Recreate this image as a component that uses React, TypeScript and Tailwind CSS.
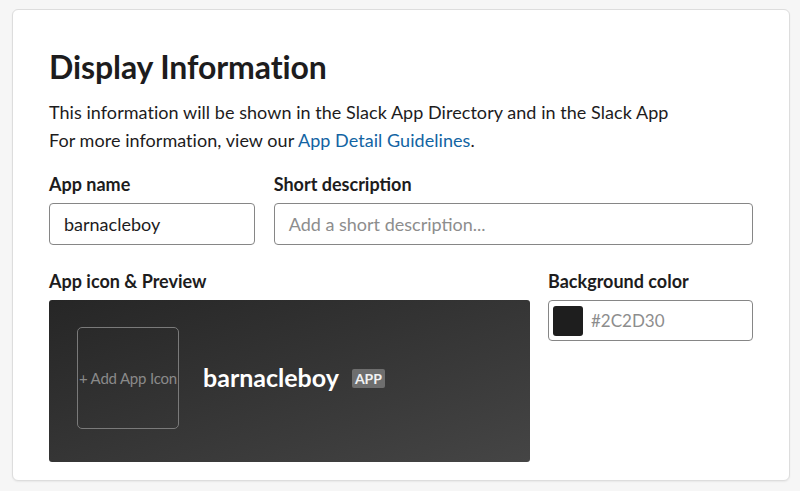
import React from "react";

const font = { fontFamily: "Lato, 'Open Sans', sans-serif" };

function Label({ children }: { children: React.ReactNode }) {
  return <div className="text-[18px] font-bold leading-[22px] text-[#1d1c1d] mb-[8px]">{children}</div>;
}

export default function App() {
  return (
    <div className="min-h-screen w-full bg-[#f6f6f6] pt-[9px] px-[12px] pb-[10px]" style={font}>
      <div className="w-[778px] h-[472px] bg-white border border-[#dddddd] rounded-[6px] shadow-[0_1px_2px_rgba(0,0,0,0.06)] px-[36px] pt-[37px]">
        {/* Header */}
        <h1 className="text-[32px] font-bold leading-[40px] text-[#1d1c1d] tracking-[-0.1px]">Display Information</h1>
        <p className="mt-[11px] text-[18px] leading-[28px] text-[#1d1c1d] tracking-[0.05px]">
          This information will be shown in the Slack App Directory and in the Slack App
          <br />
          For more information, view our <a className="text-[#1264a3]">App Detail Guidelines</a>.
        </p>

        {/* Name + description */}
        <div className="mt-[19px] flex gap-[19px]">
          <div className="w-[206px]">
            <Label>App name</Label>
            <div className="h-[42px] border border-[#868686] rounded-[4px] flex items-center px-[14px] text-[18px] text-[#1d1c1d]">
              barnacleboy
            </div>
          </div>
          <div className="w-[480px]">
            <Label>Short description</Label>
            <div className="h-[42px] border border-[#868686] rounded-[4px] flex items-center px-[14px] text-[18px] text-[#8d8d8d]">
              Add a short description...
            </div>
          </div>
        </div>

        {/* Icon preview + background colour */}
        <div className="mt-[25px] flex gap-[18px]">
          <div className="w-[481px]">
            <Label>App icon &amp; Preview</Label>
            <div className="h-[162px] rounded-[3px] bg-gradient-to-br from-[#262626] to-[#454545] flex items-start pt-[27px] px-[28px]">
              <div className="w-[102px] h-[102px] border border-[#7a7a7a] rounded-[5px] flex items-center justify-center text-[15px] text-[#8a8a8a] whitespace-nowrap tracking-[-0.2px]">
                + Add App Icon
              </div>
              <div className="h-[102px] flex items-center">
                <span className="ml-[24px] text-[25px] font-bold text-white">barnacleboy</span>
                <span className="ml-[13px] mt-[1px] px-[3px] h-[19px] leading-[19px] rounded-[2px] bg-[#6e6e6e] text-[14px] font-bold text-[#f2f2f2]">APP</span>
              </div>
            </div>
          </div>
          <div className="w-[205px]">
            <Label>Background color</Label>
            <div className="h-[41px] border border-[#868686] rounded-[4px] flex items-center pl-[4px] gap-[8px]">
              <div className="w-[30px] h-[30px] rounded-[3px] bg-[#1e1e1e]" />
              <span className="text-[17px] text-[#8d8d8d]">#2C2D30</span>
            </div>
          </div>
        </div>
      </div>
    </div>
  );
}
